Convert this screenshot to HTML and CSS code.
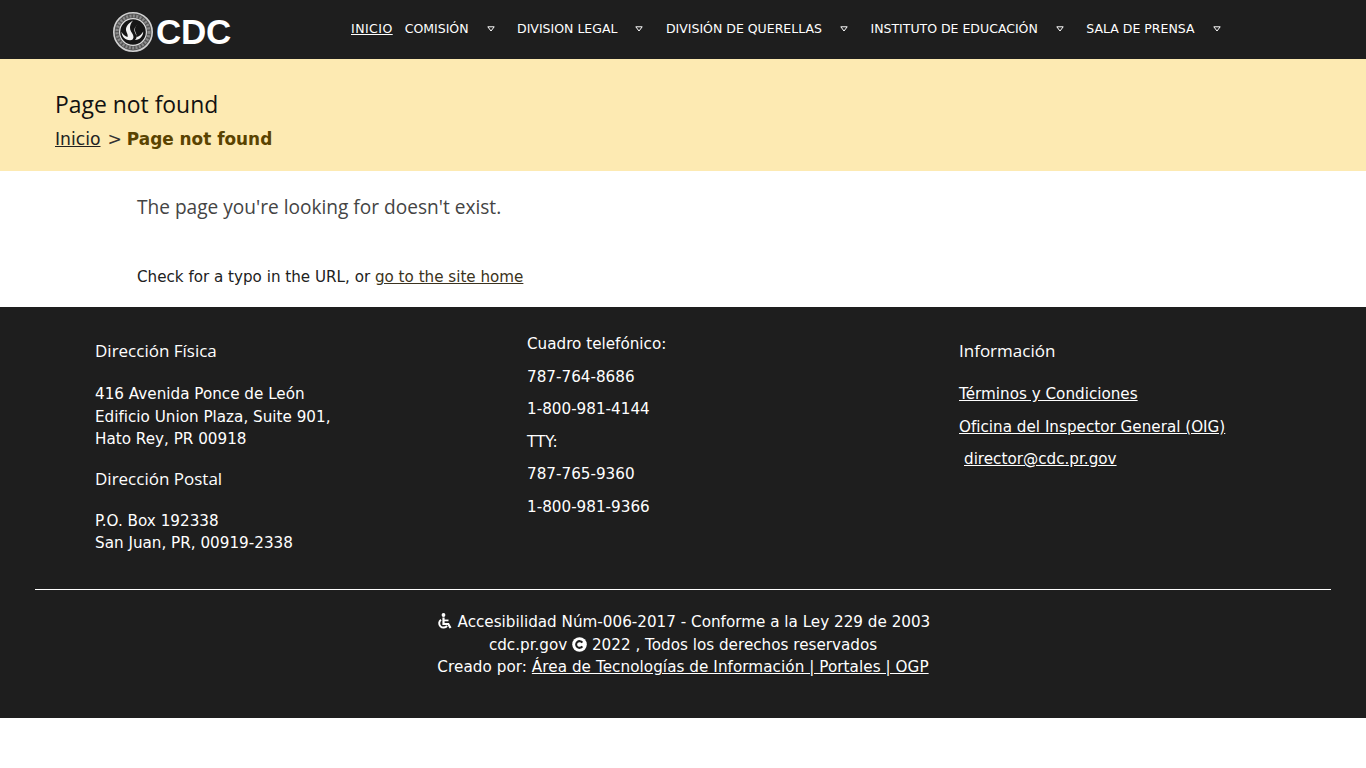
FILE: index.html
```html
<!DOCTYPE html>
<html lang="es">
<head>
<meta charset="utf-8">
<title>Page not found</title>
<link rel="stylesheet" href="styles.css">
</head>
<body>
<header class="topbar">
  <a class="logo" href="#">
    <svg class="seal" viewBox="0 0 40 40" width="40" height="40"><circle cx="20" cy="20" r="19.2" fill="#555" stroke="#d0d0d0" stroke-width="1.6"/><circle cx="20" cy="20" r="16" fill="none" stroke="#8a8a8a" stroke-width="3" stroke-dasharray="2 1.4"/><circle cx="20" cy="20" r="13.4" fill="#161616" stroke="#dedede" stroke-width="1.2"/><path d="M20 8.5c-5 3-8.5 7-6.5 11.5 1 2.2 1.5 3.5 1 5-2.500-.8-5-2.800-6-5.200.2 4.700 3.500 8.200 8.500 8.500 2 .1 3.500-1.300 3.500-3.300 0-3-2.500-4.500-3.300-7.500-.8-3.200.7-6.500 2.800-9z" fill="#f4f4f4"/><path d="M25.500 11.500c-2.800 2-4.800 5-3.800 8.300.7 2.300 2 3.700 2.200 5.200 2.600-.8 5-2.900 6.300-5.500 0 4.500-3 8.200-8.200 8.600 2-2 2-4.200 1-6.600-1.800-3.800-1.300-7.300 2.500-10z" fill="#f4f4f4"/></svg>
    <span class="logo-text">CDC</span>
  </a>
  <nav class="menu">
    <a class="item current" href="#">INICIO</a>
    <a class="item" href="#">COMISIÓN<svg class="caret" viewBox="0 0 8 6" width="8" height="6"><path d="M.8.8h6.400L4 5z" fill="none" stroke="#fff"/></svg></a>
    <a class="item" href="#">DIVISION LEGAL<svg class="caret" viewBox="0 0 8 6" width="8" height="6"><path d="M.8.8h6.400L4 5z" fill="none" stroke="#fff"/></svg></a>
    <a class="item" href="#">DIVISIÓN DE QUERELLAS<svg class="caret" viewBox="0 0 8 6" width="8" height="6"><path d="M.8.8h6.400L4 5z" fill="none" stroke="#fff"/></svg></a>
    <a class="item" href="#">INSTITUTO DE EDUCACIÓN<svg class="caret" viewBox="0 0 8 6" width="8" height="6"><path d="M.8.8h6.400L4 5z" fill="none" stroke="#fff"/></svg></a>
    <a class="item" href="#">SALA DE PRENSA<svg class="caret" viewBox="0 0 8 6" width="8" height="6"><path d="M.8.8h6.400L4 5z" fill="none" stroke="#fff"/></svg></a>
  </nav>
</header>
<section class="banner">
  <h1>Page not found</h1>
  <p class="crumbs"><a class="crumb-link" href="#">Inicio</a> &gt; <strong>Page not found</strong></p>
</section>
<main class="content">
  <h2>The page you're looking for doesn't exist.</h2>
  <p>Check for a typo in the URL, or <a class="home-link" href="#">go to the site home</a></p>
</main>
<footer class="footer">
  <div class="cols">
    <div class="col">
      <h3>Dirección Física</h3>
      <p>416 Avenida Ponce de León<br>Edificio Union Plaza, Suite 901,<br>Hato Rey, PR 00918</p>
      <h3 class="postal">Dirección Postal</h3>
      <p>P.O. Box 192338<br>San Juan, PR, 00919-2338</p>
    </div>
    <div class="col phones">
      <p>Cuadro telefónico:</p><p>787-764-8686</p><p>1-800-981-4144</p><p>TTY:</p><p>787-765-9360</p><p>1-800-981-9366</p>
    </div>
    <div class="col links">
      <h3>Información</h3>
      <p><a href="#">Términos y Condiciones</a></p>
      <p><a href="#">Oficina del Inspector General (OIG)</a></p>
      <p class="mail"><a href="#">director@cdc.pr.gov</a></p>
    </div>
  </div>
  <hr>
  <div class="legal">
    <div><svg class="glyph" viewBox="0 0 17 16" width="17" height="16"><circle cx="7.500" cy="2" r="1.900" fill="#fff"/><path d="M7.500 4.500v6.500h4.800l2.200 4" fill="none" stroke="#fff" stroke-width="2.200"/><path d="M8 7.400h4.500" stroke="#fff" stroke-width="1.700"/><path d="M5 6.800a4.300 4.300 0 1 0 6 6" fill="none" stroke="#fff" stroke-width="2"/></svg> Accesibilidad Núm-006-2017 - Conforme a la Ley 229 de 2003</div>
    <div>cdc.pr.gov <svg class="glyph" viewBox="0 0 16 16" width="15" height="15"><circle cx="8" cy="8" r="7.800" fill="#fff"/><path d="M11 6a3.600 3.600 0 1 0 0 4" fill="none" stroke="#1e1e1e" stroke-width="2.200"/></svg> 2022 , Todos los derechos reservados</div>
    <div class="credit">Creado por: <a href="#">Área de Tecnologías de Información | Portales | OGP</a></div>
  </div>
</footer>
</body>
</html>
```
FILE: styles.css
```css
* { box-sizing: border-box; }
html, body { margin: 0; padding: 0; }
body { background: #fff; font-family: "DejaVu Sans", sans-serif; color: #212121; }
a { color: inherit; }
.topbar { height: 59px; background: #1e1e1e; display: flex; align-items: center; padding-left: 113px; }
.logo { display: flex; align-items: center; gap: 3px; text-decoration: none; color: #fff; width: 238px; margin-top: 5px; }
.logo-text { font: bold 35px "Liberation Sans", sans-serif; letter-spacing: -0.3px; }
.menu { display: flex; align-items: center; font: 12.5px "DejaVu Sans", sans-serif; color: #fff; margin-bottom: 2px; }
.item { text-decoration: none; margin-right: 12px; display: flex; align-items: center; }
.item.current { text-decoration: underline; letter-spacing: .45px; }
.caret { margin: 0 10.5px 0 18px; }
.banner { height: 112px; background: #fdeab2; padding: 32px 55px 0; }
.banner h1 { margin: 0; font: 400 22.9px/28px "Open Sans", sans-serif; color: #111; }
.crumbs { margin: 8px 0 0; font-size: 17.2px; line-height: 24px; color: #333; }
.crumb-link { margin-right: 1.5px; color: #222; }
.crumbs strong { color: #5a4300; font-size: 16.9px; margin-left: -.5px; }
.content { height: 136px; padding: 22px 137px 0; }
.content h2 { margin: 0; font: 400 19.1px/28px "Open Sans", sans-serif; color: #444; }
.content p { margin: 44px 0 0; font-size: 15.15px; line-height: 24px; }
.home-link { color: #3b3320; }
.footer { height: 411px; background: #1e1e1e; color: #fff; font-size: 15.2px; padding: 24px 35px 0; }
.cols { display: grid; grid-template-columns: repeat(3, 432px); padding-left: 60px; height: 258px; }
.col h3 { margin: 8px 0 20px; font: 400 17px/24px "Open Sans", sans-serif; }
.col .postal { margin-bottom: 19.4px; }
.col p { margin: 0 0 16px; line-height: 22.5px; }
.phones { margin-top: 2px; }
.phones p { margin-bottom: 10px; }
.links p { margin-bottom: 10px; }
.mail { padding-left: 5px; }
hr { margin: 0; border: 0; border-top: 1px solid #fff; }
.legal { margin-top: 21px; text-align: center; line-height: 22.5px; }
.credit { letter-spacing: .06px; }
.glyph { vertical-align: -2px; }
```
